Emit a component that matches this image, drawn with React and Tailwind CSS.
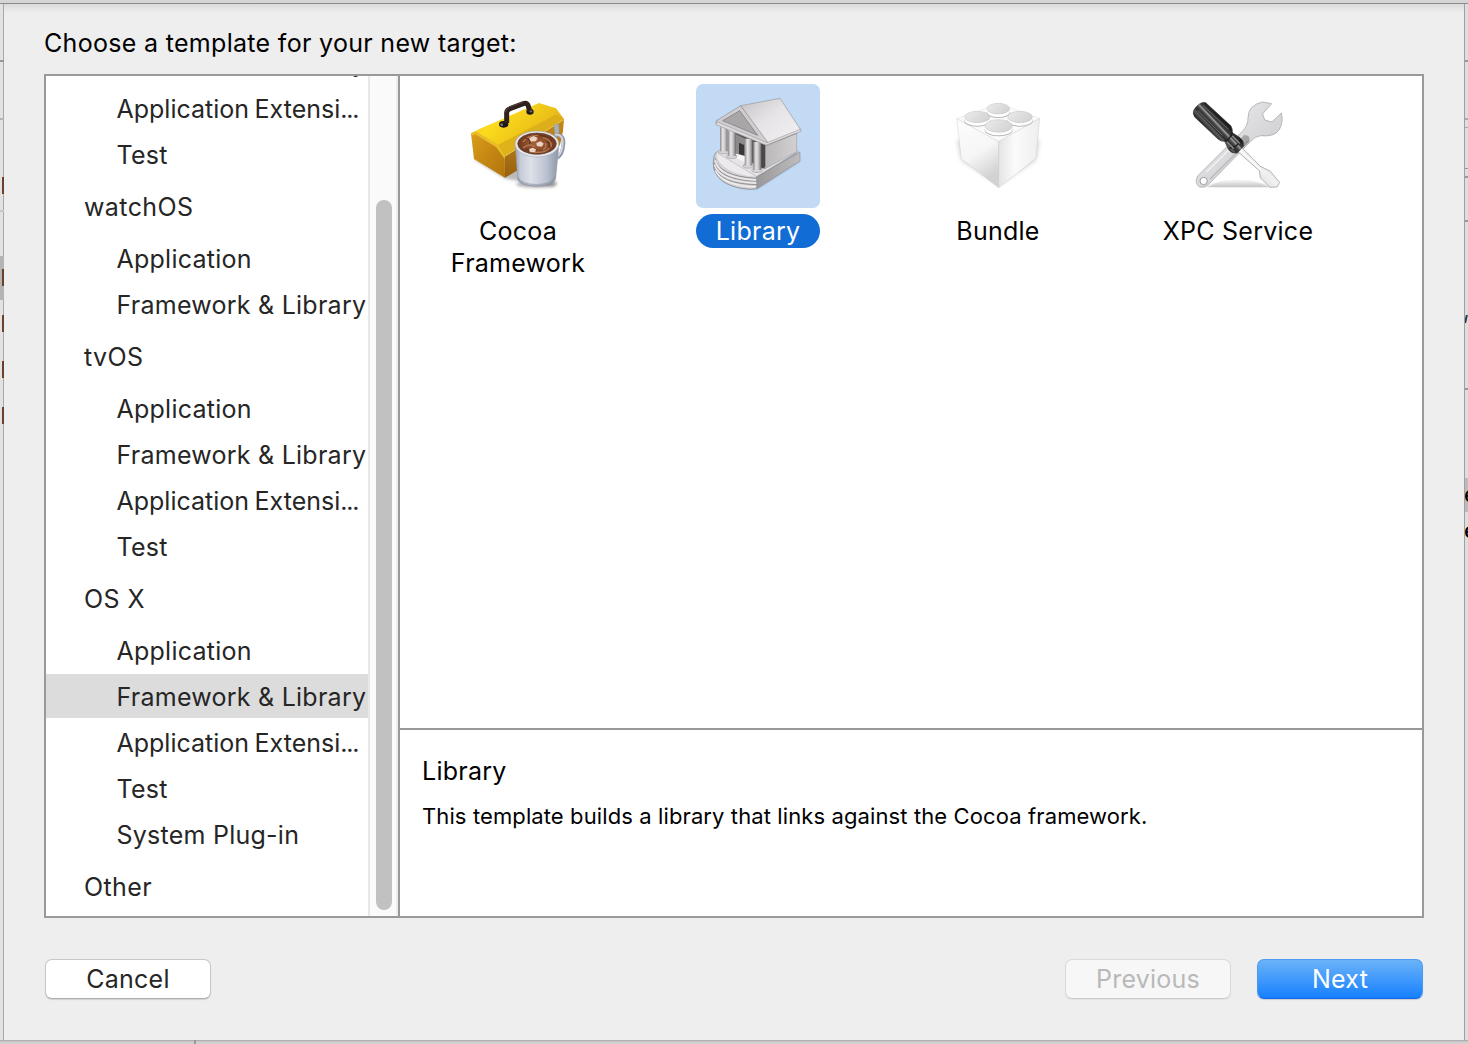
import React from "react";

const ITEMS = [
  { label: "Framework & Library" },
  { label: "Application Extensi", truncated: true },
  { label: "Test" },
  { label: "watchOS", header: true },
  { label: "Application" },
  { label: "Framework & Library" },
  { label: "tvOS", header: true },
  { label: "Application" },
  { label: "Framework & Library" },
  { label: "Application Extensi", truncated: true },
  { label: "Test" },
  { label: "OS X", header: true },
  { label: "Application" },
  { label: "Framework & Library", selected: true },
  { label: "Application Extensi", truncated: true },
  { label: "Test" },
  { label: "System Plug-in" },
  { label: "Other", header: true },
];

function ToolboxIcon() {
  return (
    <svg viewBox="-12 -3 372 372" className="size-[124px]">
      <defs>
        <linearGradient id="tbTop" x1="0" y1="0" x2="1" y2="0.6">
          <stop offset="0" stopColor="#ecc71f" />
          <stop offset="0.35" stopColor="#fbdb1c" />
          <stop offset="0.7" stopColor="#ecc219" />
          <stop offset="1" stopColor="#d9a81e" />
        </linearGradient>
        <linearGradient id="tbLeft" x1="0" y1="0" x2="1" y2="1">
          <stop offset="0" stopColor="#d9a01c" />
          <stop offset="0.5" stopColor="#c68812" />
          <stop offset="1" stopColor="#b3740f" />
        </linearGradient>
        <linearGradient id="tbFront" x1="0" y1="0" x2="0" y2="1">
          <stop offset="0" stopColor="#c78d18" />
          <stop offset="1" stopColor="#96600f" />
        </linearGradient>
        <linearGradient id="mug" x1="0" y1="0" x2="1" y2="0">
          <stop offset="0" stopColor="#9aa2b1" />
          <stop offset="0.12" stopColor="#c6ccd8" />
          <stop offset="0.35" stopColor="#dde1e9" />
          <stop offset="0.7" stopColor="#bcc3d1" />
          <stop offset="1" stopColor="#8c94a6" />
        </linearGradient>
        <radialGradient id="cocoa">
          <stop offset="0" stopColor="#a5673f" />
          <stop offset="0.6" stopColor="#8a4a29" />
          <stop offset="1" stopColor="#6a3820" />
        </radialGradient>
        <filter id="tbBlur" x="-20%" y="-50%" width="140%" height="200%">
          <feGaussianBlur stdDeviation="5" />
        </filter>
        <filter id="tbSoft">
          <feGaussianBlur stdDeviation="1.4" />
        </filter>
      </defs>
      <path d="M40 222 L136 281 L280 305 L290 290 L170 200Z" fill="#777" opacity="0.5" filter="url(#tbBlur)" />
      <ellipse cx="230" cy="298" rx="62" ry="10" fill="#666" opacity="0.5" filter="url(#tbBlur)" />
      <path d="M33 146 L46 140 L112 180 L134 212 L135 278 L42 222Z" fill="url(#tbLeft)" />
      <path d="M33 145 L58 132 L237 54 L288 70 L312 102 L134 213 L112 181 L47 142Z" fill="url(#tbTop)" />
      <path d="M33 145 L48 139 L114 179 L135 211 L134 222 L109 187 L46 148 L34 152Z" fill="#e9bd28" />
      <path d="M114 180 L290 88 L312 102 L135 213Z" fill="#d8ab1b" opacity="0.75" />
      <path d="M135 213 L312 102 L309 138 L300 180 L135 278Z" fill="url(#tbFront)" />
      <path d="M136 213 L311 104" stroke="#efc94a" strokeWidth="3" />
      <path d="M282 122 L296 115 L298 143 L284 148Z" fill="#aab0ba" stroke="#7b7f88" />
      <ellipse cx="131" cy="118" rx="14" ry="10" fill="#1e1a19" />
      <ellipse cx="210" cy="80" rx="11" ry="9" fill="#1e1a19" />
      <path d="M140 114 L140 82 Q141 75 150 71 L190 56 Q200 52 204 61 L210 80" fill="none" stroke="#2e211e" strokeWidth="15" strokeLinejoin="round" />
      <path d="M136 82 Q138 71 149 66 L190 51" fill="none" stroke="#5d433a" strokeWidth="3" />
      <circle cx="125" cy="119" r="4" fill="#77777c" />
      <circle cx="213" cy="79" r="3.5" fill="#6c6c70" />
      <path d="M284 151 Q314 146 310 178 Q308 208 292 218" fill="none" stroke="#8d94a3" strokeWidth="11" />
      <path d="M284 149 Q310 146 308 177 Q306 205 291 216" fill="none" stroke="#cfd4de" strokeWidth="6" />
      <path d="M166 180 L173 282 Q178 302 231 304 Q280 301 287 280 L297 178Z" fill="url(#mug)" stroke="#8f96a4" strokeWidth="1.5" />
      <path d="M174 275 Q184 296 231 297 Q276 295 287 272 L286 284 Q275 304 231 305 Q180 303 173 284Z" fill="#7f879a" opacity="0.5" />
      <ellipse cx="231" cy="177" rx="66" ry="39" fill="#e4e7ee" stroke="#9aa0ae" strokeWidth="1.5" />
      <ellipse cx="231" cy="176" rx="58" ry="32" fill="url(#cocoa)" stroke="#6b4330" strokeWidth="2" />
      <g fill="none" strokeWidth="4" strokeLinecap="round" filter="url(#tbSoft)">
        <path d="M190 170 Q205 150 232 152 M190 188 Q208 174 222 184 M250 158 Q276 164 274 184 M222 201 Q255 205 267 190 M256 176 Q262 185 250 194" stroke="#b57b52" />
        <path d="M198 160 Q215 162 209 176 M243 152 Q265 155 276 168 M200 194 Q218 200 228 195 M262 170 Q272 176 266 185" stroke="#643220" />
      </g>
      <g fill="#ecd3c3" filter="url(#tbSoft)">
        <path d="M207 160 l14 -7 12 6 -5 9 -15 2Z" />
        <path d="M229 174 l13 -5 9 7 -6 9 -14 -2Z" />
        <path d="M207 193 l10 -5 11 5 -3 9 -15 0Z" />
      </g>
    </svg>
  );
}

function LibraryIcon() {
  return (
    <svg viewBox="18 12 372 372" className="size-[124px]">
      <defs>
        <linearGradient id="lbRoof" x1="0" y1="0" x2="1" y2="1">
          <stop offset="0" stopColor="#c4c2c4" />
          <stop offset="0.45" stopColor="#e6e4e6" />
          <stop offset="1" stopColor="#f3f2f3" />
        </linearGradient>
        <linearGradient id="lbWall" x1="0" y1="0" x2="1" y2="0">
          <stop offset="0" stopColor="#b9b6b8" />
          <stop offset="1" stopColor="#d3d0d2" />
        </linearGradient>
        <linearGradient id="lbCol" x1="0" y1="0" x2="1" y2="0">
          <stop offset="0" stopColor="#8d8a8c" />
          <stop offset="0.35" stopColor="#e6e4e6" />
          <stop offset="0.65" stopColor="#c9c6c8" />
          <stop offset="1" stopColor="#777476" />
        </linearGradient>
        <linearGradient id="lbBase" x1="0" y1="0" x2="1" y2="0">
          <stop offset="0" stopColor="#9b989a" />
          <stop offset="1" stopColor="#bfbcbe" />
        </linearGradient>
        <filter id="lbBlur" x="-20%" y="-20%" width="140%" height="140%">
          <feGaussianBlur stdDeviation="3" />
        </filter>
      </defs>
      <path d="M72 250 Q75 322 200 328 L330 244 L322 215Z" fill="#6f7a8c" opacity="0.5" filter="url(#lbBlur)" />
      <path d="M77 218 Q66 235 72 268 Q90 322 180 328 Q195 328 202 322 L202 292 L90 214Z" fill="#d2d0d2" stroke="#7d7a7c" strokeWidth="2" />
      <g fill="none" stroke="#959294" strokeWidth="3">
        <path d="M75 234 Q84 288 199 295" />
        <path d="M72 247 Q86 299 200 304" />
        <path d="M72 260 Q90 312 201 314" />
      </g>
      <g fill="none" stroke="#efeeef" strokeWidth="4">
        <path d="M76 241 Q88 294 198 300" />
        <path d="M73 254 Q90 306 199 309" />
        <path d="M76 272 Q98 317 198 321" />
      </g>
      <path d="M78 217 L200 290 L326 213 L220 170 L110 200Z" fill="#e6e4e6" stroke="#a4a1a3" strokeWidth="1.5" />
      <path d="M80 219 Q80 248 110 266 Q145 287 199 290Z" fill="#eceaec" />
      <path d="M200 290 L330 216 L330 243 L201 326Z" fill="url(#lbBase)" stroke="#858284" strokeWidth="1.5" />
      <path d="M130 155 L226 195 L226 268 L130 222Z" fill="#5b585a" />
      <path d="M136 162 L168 178 L168 230 L136 220Z" fill="#8d8a8c" />
      <path d="M147 188 L163 195 L163 228 L147 222Z" fill="#3a3739" />
      <path d="M134 220 L165 228 L165 247 L134 232Z" fill="#f7f6f7" />
      <path d="M218 188 L320 153 L320 215 L222 268Z" fill="url(#lbWall)" stroke="#949193" strokeWidth="1.5" />
      <path d="M214 190 L226 195 L226 262 L214 266Z" fill="#4b484a" />
      {[
        [90, 142, 214],
        [114, 152, 228],
        [164, 176, 257],
        [190, 186, 270],
      ].map(([x, top, bottom]) => (
        <g key={x}>
          <ellipse cx={x + 11} cy={bottom + 1} rx="16" ry="6.5" fill="#d6d4d6" stroke="#8e8b8d" strokeWidth="1.5" />
          <rect x={x} y={top} width="23" height={bottom - top} fill="url(#lbCol)" />
        </g>
      ))}
      <path d="M152 77 L270 55 L333 151 L232 193Z" fill="url(#lbRoof)" stroke="#9a979a" strokeWidth="2" />
      <path d="M78 123 L152 77 L232 185 L231 196 L78 132Z" fill="#cfcdcf" stroke="#8e8b8d" strokeWidth="2" />
      <path d="M98 122 L149 92 L203 166Z" fill="#a9a6a8" stroke="#858284" strokeWidth="2.5" />
      <path d="M80 125 L231 188 L332 147 L333 154 L232 197 L78 134Z" fill="#dddbdd" stroke="#8e8b8d" strokeWidth="1.5" />
      <path d="M225 197 L320 160" stroke="#8a8789" strokeWidth="3" opacity="0.7" />
    </svg>
  );
}

function BundleIcon() {
  return (
    <svg viewBox="-12 -3 372 372" className="size-[124px]">
      <defs>
        <linearGradient id="bdLeft" x1="0" y1="0" x2="0.4" y2="1">
          <stop offset="0" stopColor="#fdfdfd" />
          <stop offset="0.6" stopColor="#f6f6f6" />
          <stop offset="1" stopColor="#d2d2d2" />
        </linearGradient>
        <linearGradient id="bdRight" x1="0" y1="0" x2="1" y2="0">
          <stop offset="0" stopColor="#e4e4e4" />
          <stop offset="0.4" stopColor="#fbfbfb" />
          <stop offset="1" stopColor="#eeeeee" />
        </linearGradient>
        <linearGradient id="bdStud" x1="0" y1="0" x2="1" y2="0.5">
          <stop offset="0" stopColor="#ececec" />
          <stop offset="1" stopColor="#d4d4d4" />
        </linearGradient>
        <filter id="bdBlur" x="-20%" y="-30%" width="140%" height="160%">
          <feGaussianBlur stdDeviation="8" />
        </filter>
      </defs>
      <path d="M54 165 L66 224 L176 298 L286 224 L296 165Z" fill="#777" opacity="0.42" filter="url(#bdBlur)" />
      <path d="M50 101 L176 56 L299 100 L176 170Z" fill="#fafafa" stroke="#dedede" strokeWidth="1.5" />
      <path d="M50 101 L176 170 L176 308 L64 222Z" fill="url(#bdLeft)" stroke="#d0d0d0" strokeWidth="1.5" />
      <path d="M299 100 L176 170 L176 308 L288 220Z" fill="url(#bdRight)" stroke="#cfcfcf" strokeWidth="1.5" />
      {[
        [175, 71, 34, 16],
        [112, 96, 38, 17],
        [240, 96, 37, 17],
        [176, 123, 41, 19],
      ].map(([x, y, rx, ry]) => (
        <g key={`${x}-${y}`}>
          <ellipse cx={x} cy={y + 12} rx={rx + 1} ry={ry} fill="#b9b9b9" />
          <ellipse cx={x} cy={y + 9} rx={rx} ry={ry} fill="#ffffff" />
          <rect x={x - rx} y={y} width={rx * 2} height="9" fill="#ffffff" />
          <ellipse cx={x} cy={y} rx={rx} ry={ry} fill="url(#bdStud)" stroke="#c0c0c0" strokeWidth="1.5" />
        </g>
      ))}
    </svg>
  );
}

function ToolsIcon() {
  return (
    <svg viewBox="-12 -3 372 372" className="size-[124px]">
      <defs>
        <linearGradient id="xpWrench" x1="0" y1="0" x2="1" y2="1">
          <stop offset="0" stopColor="#f5f5f6" />
          <stop offset="0.45" stopColor="#dcdcde" />
          <stop offset="1" stopColor="#c4c5c8" />
        </linearGradient>
        <linearGradient id="xpHandle" gradientUnits="userSpaceOnUse" x1="80" y1="130" x2="118" y2="94">
          <stop offset="0" stopColor="#2a2a2a" />
          <stop offset="0.22" stopColor="#5c5c5c" />
          <stop offset="0.32" stopColor="#2c2c2c" />
          <stop offset="0.5" stopColor="#444" />
          <stop offset="0.62" stopColor="#a0a0a0" />
          <stop offset="0.7" stopColor="#404040" />
          <stop offset="1" stopColor="#1c1c1c" />
        </linearGradient>
        <linearGradient id="xpBlade" x1="0" y1="1" x2="1" y2="0">
          <stop offset="0" stopColor="#b5b6b9" />
          <stop offset="0.5" stopColor="#f1f1f2" />
          <stop offset="1" stopColor="#c8c9cc" />
        </linearGradient>
        <linearGradient id="xpFloor" x1="0" y1="0" x2="0" y2="1">
          <stop offset="0" stopColor="#999" stopOpacity="0" />
          <stop offset="1" stopColor="#999" stopOpacity="0.6" />
        </linearGradient>
        <filter id="xpBlur" x="-20%" y="-30%" width="140%" height="130%">
          <feGaussianBlur stdDeviation="6 1" />
        </filter>
      </defs>
      <path d="M80 307 Q110 284 172 282 Q235 284 270 307Z" fill="url(#xpFloor)" filter="url(#xpBlur)" />
      <path d="M53 273 L186 140 Q205 122 204 98 Q205 60 248 51 L275 56 L248 86 L254 105 L276 111 L304 84 Q311 110 298 134 Q282 157 243 152 Q226 153 212 169 L86 298 Q74 310 58 306 Q42 294 53 273Z" fill="url(#xpWrench)" stroke="#a3a4a7" strokeWidth="2.2" />
      <path d="M78 262 L190 152" stroke="#fff" strokeWidth="5" opacity="0.5" />
      <path d="M90 282 L208 166" stroke="#9fa0a3" strokeWidth="5" opacity="0.5" />
      <path d="M192 150 Q215 150 206 170 L175 203 L160 180Z" fill="#555" opacity="0.4" />
      <circle cx="71" cy="288" r="11" fill="#fff" stroke="#9a9b9e" strokeWidth="3" />
      <path d="M172 199 L185 187 L241 244 L270 258 L299 292 L291 306 L270 307 L241 279 L238 257Z" fill="url(#xpBlade)" stroke="#9b9c9f" strokeWidth="2.2" strokeLinejoin="round" />
      <path d="M182 197 L242 255" stroke="#fff" strokeWidth="4" />
      <path d="M40 86 Q38 76 50 64 Q65 49 77 53 L153 123 Q158 132 157 143 L180 158 Q194 170 190 184 L172 204 Q156 207 146 194 L134 169 Q123 170 114 162 L44 96Z" fill="url(#xpHandle)" stroke="#333" strokeWidth="2" />
      <path d="M55 78 L126 150 M70 62 L144 132" stroke="#6c6c6c" strokeWidth="3" strokeLinecap="round" />
      <path d="M134 168 Q150 164 157 142 M148 190 Q175 185 184 163" fill="none" stroke="#1c1c1c" strokeWidth="4" />
      <path d="M142 172 L160 190 M158 154 L178 174" stroke="#8f8f8f" strokeWidth="4" strokeLinecap="round" />
    </svg>
  );
}

function Template({ icon, lines, selected }) {
  return (
    <div className="flex w-60 flex-col items-center pt-2">
      <div className={selected ? "size-[124px] rounded-[7px] bg-[#c3daf5]" : "size-[124px]"}>{icon}</div>
      <div
        className={
          selected
            ? "mt-1.5 w-[124px] rounded-full bg-[#116cd6] py-px text-center leading-8 text-white"
            : "mt-1.5 py-px text-center leading-8 text-black"
        }
      >
        {lines.map((line) => (
          <div key={line}>{line}</div>
        ))}
      </div>
    </div>
  );
}

function SidebarItem({ item }) {
  if (item.header) {
    return <div className="h-[58px] pl-[38px] leading-[58px] tracking-[0.4px]">{item.label}</div>;
  }
  return (
    <div className="h-[46px]">
      <div className={item.selected ? "h-11 bg-[#dcdcdc] pl-[70.5px] leading-[46px]" : "h-11 pl-[70.5px] leading-[46px]"}>
        {item.truncated ? (
          <span className="tracking-[0px] [word-spacing:-1.5px]">
            {item.label}
            <span className="tracking-[-1.2px]">...</span>
          </span>
        ) : (
          item.label
        )}
      </div>
    </div>
  );
}

function EdgeMark({ className }) {
  return <div className={`absolute ${className}`} />;
}

export default function App() {
  return (
    <div className="flex h-[1044px] w-[1468px] flex-col overflow-hidden bg-[#dcdcdc] font-['Inter',sans-serif] text-[25px] tracking-[0.25px] text-[#262626]">
      <div className="h-1 shrink-0 border-b border-[#8c8c8c] bg-[#d5d5d5]" />
      <div className="flex h-[1036px] shrink-0">
        <div className="relative w-1 border-r border-[#a8a8a8] bg-[#e2e2e2]">
          <EdgeMark className="top-14 h-0.5 w-1 bg-[#999]" />
          <EdgeMark className="top-[114px] h-0.5 w-1 bg-[#b5b5b5]" />
          <EdgeMark className="top-[206px] h-0.5 w-1 bg-[#c8c8c8]" />
          <EdgeMark className="top-[252px] h-11 w-1 bg-[#b4b4b4]" />
          <EdgeMark className="left-0.5 top-[173px] h-[17px] w-0.5 bg-[#6b412a]" />
          <EdgeMark className="left-0.5 top-[265px] h-[17px] w-0.5 bg-[#6b412a]" />
          <EdgeMark className="left-0.5 top-[311px] h-[17px] w-0.5 bg-[#6b412a]" />
          <EdgeMark className="left-0.5 top-[357px] h-[17px] w-0.5 bg-[#6b412a]" />
          <EdgeMark className="left-0.5 top-[403px] h-[17px] w-0.5 bg-[#6b412a]" />
        </div>

        <div className="flex w-[1460px] flex-col bg-[linear-gradient(#d9d9d9,#e4e4e4_4px,#eeeeee_9px)] px-10">
          <h1 className="h-[70px] pt-[19px] leading-10 tracking-[0.31px] text-black">
            Choose a template for your new target:
          </h1>

          <div className="flex h-[844px] w-[1380px] border-2 border-[#999] bg-white">
            <div className="flex w-[354px] border-r-2 border-[#999]">
              <div className="w-[322px] overflow-hidden">
                <div className="-mt-9 flex flex-col whitespace-nowrap">
                  {ITEMS.map((item, i) => (
                    <SidebarItem key={i} item={item} />
                  ))}
                </div>
              </div>
              <div className="flex w-[30px] border-x-2 border-l-[#e8e8e8] border-r-[#ededed] bg-[#fafafa] pl-1.5 pt-[124px]">
                <div className="h-[710px] w-4 rounded-full bg-[#c1c1c1]" />
              </div>
            </div>

            <div className="flex flex-1 flex-col">
              <div className="-ml-0.5 flex h-[652px]">
                <Template icon={<ToolboxIcon />} lines={["Cocoa", "Framework"]} />
                <Template icon={<LibraryIcon />} lines={["Library"]} selected />
                <Template icon={<BundleIcon />} lines={["Bundle"]} />
                <Template icon={<ToolsIcon />} lines={["XPC Service"]} />
              </div>
              <div className="flex-1 border-t-2 border-[#999] pl-[22px] pt-[21px] text-black">
                <h2 className="leading-10">Library</h2>
                <p className="pt-[9px] text-[22px] leading-8 tracking-[0.11px]">
                  This template builds a library that links against the Cocoa framework.
                </p>
              </div>
            </div>
          </div>

          <div className="mt-[41px] flex h-10 items-stretch">
            <button className="ml-px w-[166px] rounded-[7px] border border-[#c6c6c6] border-b-[#adadad] bg-white leading-9 shadow-[0_1px_1px_rgba(0,0,0,0.12)]">
              Cancel
            </button>
            <button className="ml-auto w-[166px] rounded-[7px] border border-[#dadada] border-b-[#cccccc] bg-[#f7f7f7] leading-9 text-[#b9b9b9] shadow-[0_1px_1px_rgba(0,0,0,0.05)]">
              Previous
            </button>
            <button className="ml-[26px] mr-px w-[166px] rounded-[7px] border border-[#4c9bf0] border-b-[#1067f2] bg-[linear-gradient(#6cb3f9,#1680ff)] leading-9 text-white shadow-[0_1px_1px_rgba(0,0,0,0.15)]">
              Next
            </button>
          </div>
        </div>

        <div className="relative w-1 overflow-hidden border-l border-[#a0a0a0] bg-[#dedede]">
          <EdgeMark className="top-14 h-0.5 w-1 bg-[#999]" />
          <EdgeMark className="top-[114px] h-0.5 w-1 bg-[#aaa]" />
          <EdgeMark className="top-[123px] h-px w-1 bg-[#aaa]" />
          <EdgeMark className="top-[164px] h-px w-1 bg-[#999]" />
          <EdgeMark className="top-[172px] h-0.5 w-1 bg-[#999]" />
          <EdgeMark className="top-[216px] h-0.5 w-1 bg-[#999]" />
          <EdgeMark className="top-[384px] h-0.5 w-1 bg-[#999]" />
          <EdgeMark className="top-[311px] h-2 w-0.5 -skew-x-12 bg-[#26384f]" />
          <EdgeMark className="top-[474px] h-[34px] w-1 bg-[#bbb]" />
          <div className="absolute -left-px top-[473px] text-[22px] font-medium leading-[34px] text-black">e</div>
          <div className="absolute -left-px top-[509px] text-[22px] font-medium leading-[34px] text-black">e</div>
        </div>
      </div>
      <div className="h-1 bg-[linear-gradient(#999,#c4c4c4_1px,#d6d6d6)] pl-[194px]">
        <div className="h-1 w-0.5 bg-[#999]" />
      </div>
    </div>
  );
}
